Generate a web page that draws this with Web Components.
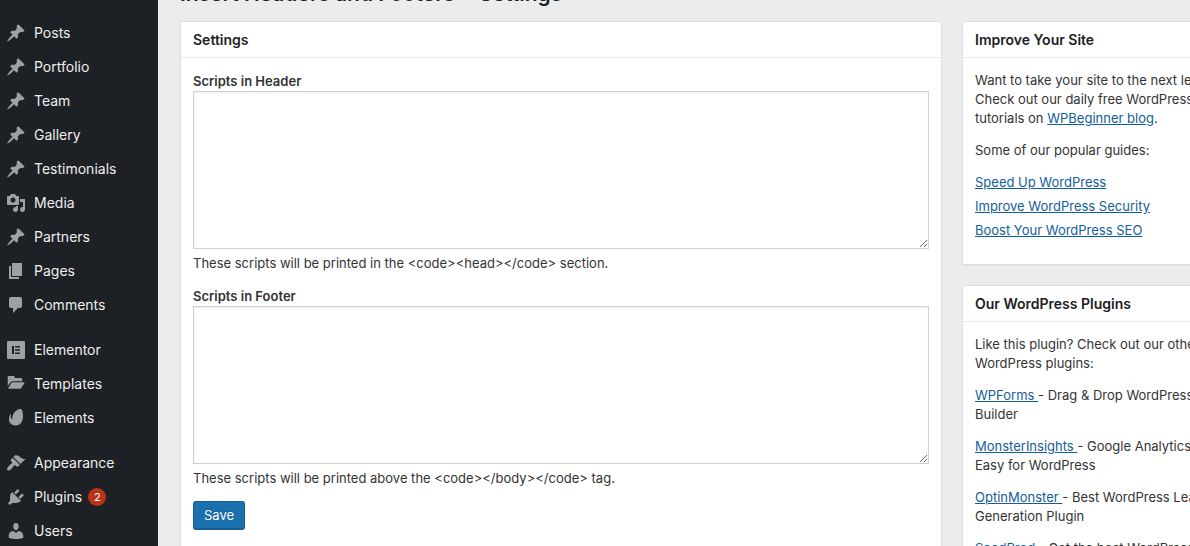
<!DOCTYPE html>
<html lang="en">
<head>
<meta charset="utf-8">
<title>Insert Headers and Footers » Settings</title>
<style>
  html, body { margin: 0; min-height: 100%; background: #ececec; }
  body { font: 13px/19px Inter, "Liberation Sans", sans-serif; color: #333; overflow: hidden; }
</style>
</head>
<body>
<wp-settings-page></wp-settings-page>

<script>
const ICONS = {
  pin: '<path d="M10.44 3.02l1.82-1.82 6.36 6.35-1.83 1.82c-1.05-.68-2.48-.57-3.41.36l-.75.75c-.92.93-1.04 2.35-.35 3.41l-1.83 1.82-2.41-2.41-2.8 2.79c-.42.42-3.38 2.71-3.8 2.29s1.86-3.39 2.28-3.81l2.79-2.79L4.1 9.36l1.83-1.82c1.05.69 2.48.57 3.4-.36l.75-.75c.93-.92 1.05-2.35.36-3.41z"/>',
  media: '<path fill-rule="evenodd" d="M13 11V4c0-.55-.45-1-1-1h-1.67L9 1H5L3.67 3H2c-.55 0-1 .45-1 1v7c0 .55.45 1 1 1h10c.55 0 1-.45 1-1zM7 4.500c1.380 0 2.500 1.120 2.500 2.500S8.380 9.500 7 9.500 4.500 8.380 4.500 7 5.620 4.500 7 4.500zM14 6h5v10.500c0 1.380-1.120 2.500-2.500 2.500S14 17.880 14 16.500s1.120-2.500 2.500-2.500c.17 0 .34.02.5.05V9h-3V6zm-4 8.050V13h2v3.500c0 1.380-1.120 2.500-2.500 2.500S7 17.880 7 16.500 8.120 14 9.500 14c.17 0 .34.02.5.05z"/>',
  page: '<path d="M6 15V2h10v13H6zm-1 1h8v2H3V5h2v11z"/>',
  comment: '<path d="M5 2h9c1.1 0 2 .9 2 2v7c0 1.1-.9 2-2 2h-2l-5 5v-5H5c-1.1 0-2-.9-2-2V4c0-1.1.9-2 2-2z"/>',
  elementor: '<path fill-rule="evenodd" d="M2 1h16a1 1 0 0 1 1 1v16a1 1 0 0 1-1 1H2a1 1 0 0 1-1-1V2a1 1 0 0 1 1-1zM6 6v8h2V6zM9 6v1.6h5V6zM9 9.2v1.6h5V9.2zM9 12.4V14h5v-1.6z"/>',
  folder: '<path d="M1.700 3.400c0-.9.500-1.400 1.400-1.400h4.200c.8 0 1.300.5 1.300 1.300v.7h6.200c.9 0 1.400.5 1.400 1.400v1.800H7.100c-1 0-1.800.4-2.400 1.100l-3 3.800z"/><path d="M2 14.400l3.500-5.300c.4-.6.900-.9 1.600-.9h10.700c.6 0 .9.500.5 1l-3 4.700c-.4.600-.9.900-1.600.9H2.400c-.4 0-.6-.1-.4-.4z"/>',
  leaf: '<path d="M15.300 1.300c1 .6 1.700 3.300 1.700 6.700 0 5.500-2.600 9.500-7.300 9.500C5.600 17.500 3 15.100 3 11.600 3 9.300 3.600 7.300 4.400 6.300c.4-.3.700-.1.600.4-.3 1.600-.2 3.300.6 4.300.3.300.6.200.6-.3C6.300 6.500 8.500 3.300 11.500 1.800c1.500-.8 3.100-.9 3.800-.5z"/>',
  brush: '<path d="M14.480 11.060L7.410 3.990l1.500-1.500c.5-.56 2.300-.47 3.510.32 1.210.8 1.430 1.280 2.910 2.100 1.180.64 2.450 1.260 4.450.85zm-.71.71L6.700 4.700 4.930 6.470c-.39.39-.39 1.020 0 1.410l1.060 1.060c.39.39.39 1.030 0 1.420-.6.6-1.430 1.110-2.210 1.690-.35.26-.7.53-1.010.84C1.430 14.230.4 16.080 1.400 17.070c.99 1 2.840-.03 4.180-1.360.31-.31.58-.66.85-1.020.57-.78 1.080-1.610 1.690-2.210.39-.39 1.020-.39 1.410 0l1.060 1.060c.39.39 1.020.39 1.410 0z"/>',
  plug: '<path d="M13.110 4.360L9.870 7.600 8 5.730l3.240-3.240c.35-.34 1.050-.2 1.560.32.52.51.66 1.210.31 1.550zm-8 1.770l.91-1.120 9.010 9.010-1.190.84c-.71.71-2.630 1.160-3.820 1.160H6.140L4.900 17.260c-.59.59-1.540.59-2.120 0-.59-.58-.59-1.530 0-2.120l1.240-1.240v-3.880c0-1.130.4-3.190 1.090-3.890zm7.260 3.970l3.240-3.240c.34-.35 1.040-.21 1.550.31.520.51.660 1.210.31 1.550l-3.240 3.250z"/>',
  user: '<path d="M10 9.250c-2.270 0-2.730-3.440-2.730-3.440C7 4.020 7.820 2 9.970 2c2.160 0 2.980 2.020 2.710 3.810 0 0-.41 3.440-2.680 3.440zm0 2.570L12.720 10c2.390 0 4.520 2.330 4.520 4.530v2.490s-3.650 1.130-7.240 1.130c-3.650 0-7.240-1.130-7.240-1.130v-2.490c0-2.250 1.940-4.480 4.470-4.480z"/>'
};

function define(name, markup, connected) {
  const template = document.createElement('template');
  template.innerHTML = markup;
  customElements.define(name, class extends HTMLElement {
    constructor() {
      super();
      this.attachShadow({ mode: 'open' }).append(template.content.cloneNode(true));
    }
    connectedCallback() { if (connected) connected(this, this.shadowRoot); }
  });
}

define('menu-item', `
  <style>
    :host { display: block; }
    a { display: flex; align-items: center; gap: 8px; height: 34px; padding-left: 6px; color: #eee; font-size: 14px; line-height: 18px; text-decoration: none; }
    svg { flex: none; width: 20px; height: 20px; fill: #9ca1a6; }
    .badge { display: none; margin-left: -2px; width: 18px; height: 18px; border-radius: 9px; background: #b93315; color: #fff; font-size: 11px; text-align: center; }
    :host([count]) .badge { display: block; }
  </style>
  <a href="#"><svg viewBox="0 0 20 20" aria-hidden="true"></svg><span><slot></slot></span><span class="badge"></span></a>`,
  (el, root) => {
    root.querySelector('svg').innerHTML = ICONS[el.getAttribute('icon')];
    root.querySelector('.badge').textContent = el.getAttribute('count') || '';
  });

define('admin-menu', `
  <style>
    :host { display: block; flex: 0 0 158px; background: #1d2024; }
    nav { display: flex; flex-direction: column; gap: 11px; padding-top: 16px; }
  </style>
  <nav aria-label="Main menu">
    <div>
      <menu-item icon="pin">Posts</menu-item>
      <menu-item icon="pin">Portfolio</menu-item>
      <menu-item icon="pin">Team</menu-item>
      <menu-item icon="pin">Gallery</menu-item>
      <menu-item icon="pin">Testimonials</menu-item>
      <menu-item icon="media">Media</menu-item>
      <menu-item icon="pin">Partners</menu-item>
      <menu-item icon="page">Pages</menu-item>
      <menu-item icon="comment">Comments</menu-item>
    </div>
    <div>
      <menu-item icon="elementor">Elementor</menu-item>
      <menu-item icon="folder">Templates</menu-item>
      <menu-item icon="leaf">Elements</menu-item>
    </div>
    <div>
      <menu-item icon="brush">Appearance</menu-item>
      <menu-item icon="plug" count="2">Plugins</menu-item>
      <menu-item icon="user">Users</menu-item>
    </div>
  </nav>`);

define('post-box', `
  <style>
    :host { display: block; background: #fff; border: 1px solid #dedede; box-shadow: 0 1px 1px rgba(0,0,0,.04); }
    h3 { margin: 0; padding: 8px 12px; border-bottom: 1px solid #e9e9e9; color: #1d2024; font-size: 14px; line-height: 19px; font-weight: 600; }
    .inside { padding: 13px 12px 24px; }
  </style>
  <h3></h3>
  <div class="inside"><slot></slot></div>`,
  (el, root) => { root.querySelector('h3').textContent = el.getAttribute('heading'); });

define('script-field', `
  <style>
    :host { display: block; margin-bottom: 13px; }
    label { display: block; line-height: 20px; font-weight: 600; }
    textarea { display: block; box-sizing: border-box; width: 100%; height: 158px; margin: 0; border: 1px solid #d0d0d0; background: #fff; box-shadow: inset 0 1px 2px rgba(0,0,0,.07); resize: vertical; outline: none; }
    p { margin: 5px 0 0; }
  </style>
  <label for="code"></label>
  <textarea id="code"></textarea>
  <p><slot></slot></p>`,
  (el, root) => { root.querySelector('label').textContent = el.getAttribute('label'); });

define('primary-button', `
  <style>
    :host { display: block; }
    button { display: block; height: 29px; padding: 0 10px; border: 1px solid #185d92; border-bottom-width: 2px; border-radius: 3px; background: #1b71ae; color: #fff; font: 13px/26px Inter, "Liberation Sans", sans-serif; text-shadow: 0 -1px 1px #185d92; }
  </style>
  <button type="button"><slot></slot></button>`);

define('wp-settings-page', `
  <style>
    :host { display: flex; height: 100vh; overflow: hidden; }
    main { flex: 1; min-width: 0; padding-left: 22px; overflow: hidden; }
    h2 { margin: -21px 0 13px; color: #1d2024; font-size: 21px; line-height: 29px; font-weight: 600; white-space: pre; }
    /* the side column runs on past the right edge of the window */
    .columns { display: flex; align-items: flex-start; gap: 20px; margin-right: -60px; }
    .primary { flex: 1; min-width: 0; }
    .side { flex: 0 0 288px; display: flex; flex-direction: column; gap: 20px; }
    p { margin: 0 0 13px; }
    ul { margin: 0; padding: 0; list-style: none; display: flex; flex-direction: column; gap: 5px; }
    a { color: #135e9c; }
  </style>
  <admin-menu></admin-menu>
  <main>
    <h2>Insert Headers and Footers » Settings</h2>
    <div class="columns">
      <post-box class="primary" heading="Settings">
        <script-field label="Scripts in Header">These scripts will be printed in the &lt;code&gt;&lt;head&gt;&lt;/code&gt; section.</script-field>
        <script-field label="Scripts in Footer">These scripts will be printed above the &lt;code&gt;&lt;/body&gt;&lt;/code&gt; tag.</script-field>
        <primary-button>Save</primary-button>
      </post-box>
      <div class="side">
        <post-box heading="Improve Your Site">
          <p>Want to take your site to the next level? Check out our daily free WordPress tutorials on <a href="#">WPBeginner blog</a>.</p>
          <p>Some of our popular guides:</p>
          <ul>
            <li><a href="#">Speed Up WordPress</a></li>
            <li><a href="#">Improve WordPress Security</a></li>
            <li><a href="#">Boost Your WordPress SEO</a></li>
          </ul>
        </post-box>
        <post-box heading="Our WordPress Plugins">
          <p>Like this plugin? Check out our other WordPress plugins:</p>
          <p><a href="#">WPForms </a>- Drag &amp; Drop WordPress Form Builder</p>
          <p><a href="#">MonsterInsights </a>- Google Analytics Made Easy for WordPress</p>
          <p><a href="#">OptinMonster </a>- Best WordPress Lead Generation Plugin</p>
          <p><a href="#">SeedProd </a>- Get the best WordPress Coming Soon Page plugin</p>
        </post-box>
      </div>
    </div>
  </main>`);
</script>
</body>
</html>
